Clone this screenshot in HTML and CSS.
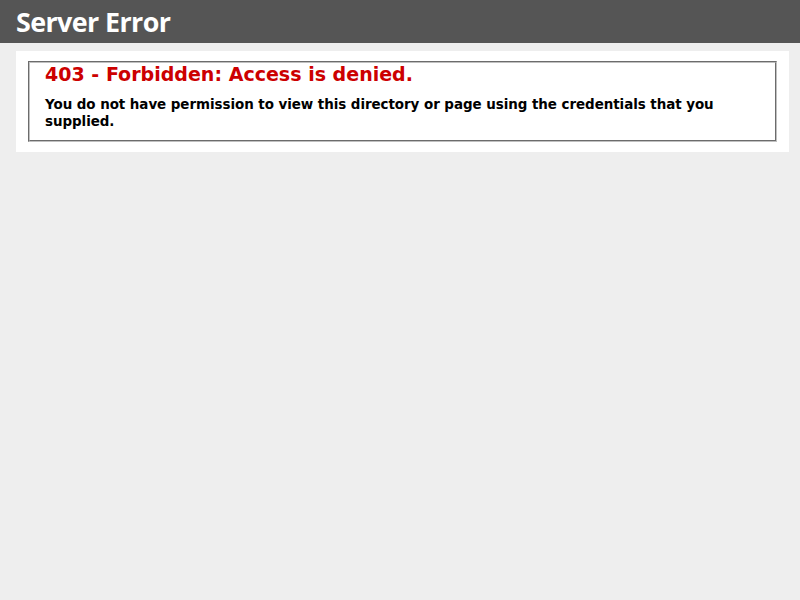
FILE: index.html
```html
<!DOCTYPE html>
<html>
<head>
<meta charset="utf-8">
<title>403 - Forbidden: Access is denied.</title>
<link rel="stylesheet" href="styles.css">
</head>
<body>
<div class="header"><h1>Server Error</h1></div>
<div class="content">
  <div class="content-container">
    <fieldset class="box">
      <h2>403 - Forbidden: Access is denied.</h2>
      <h3>You do not have permission to view this directory or page using the credentials that you supplied.</h3>
    </fieldset>
  </div>
</div>
</body>
</html>
```
FILE: styles.css
```css
body {
  margin: 0;
  font-size: 11.2px;
  font-family: "DejaVu Sans", Verdana, sans-serif;
  background: #eeeeee;
}
.header {
  width: 96%;
  padding: 6px 2%;
  font-family: "Open Sans", "DejaVu Sans", sans-serif;
  color: #fff;
  background-color: #555555;
}
.header h1 {
  font-size: 26.88px;
  line-height: 31px;
  letter-spacing: -0.6px;
  margin: 0;
  font-weight: 700;
  color: #fff;
}
.content {
  margin: 0 0 0 2%;
}
.content-container {
  background: #fff;
  width: 96%;
  margin-top: 8px;
  padding: 10px;
}
.box {
  margin: 0 2px;
  padding: 0 15px 10px 15px;
  border: 2px groove #c0c0c0;
}
.box h2 {
  font-size: 19.04px;
  line-height: 23px;
  margin: 0;
  color: #cc0000;
}
.box h3 {
  font-size: 13.44px;
  line-height: 17px;
  letter-spacing: -0.05px;
  margin: 10px 0 0 0;
  color: #000;
}
```
